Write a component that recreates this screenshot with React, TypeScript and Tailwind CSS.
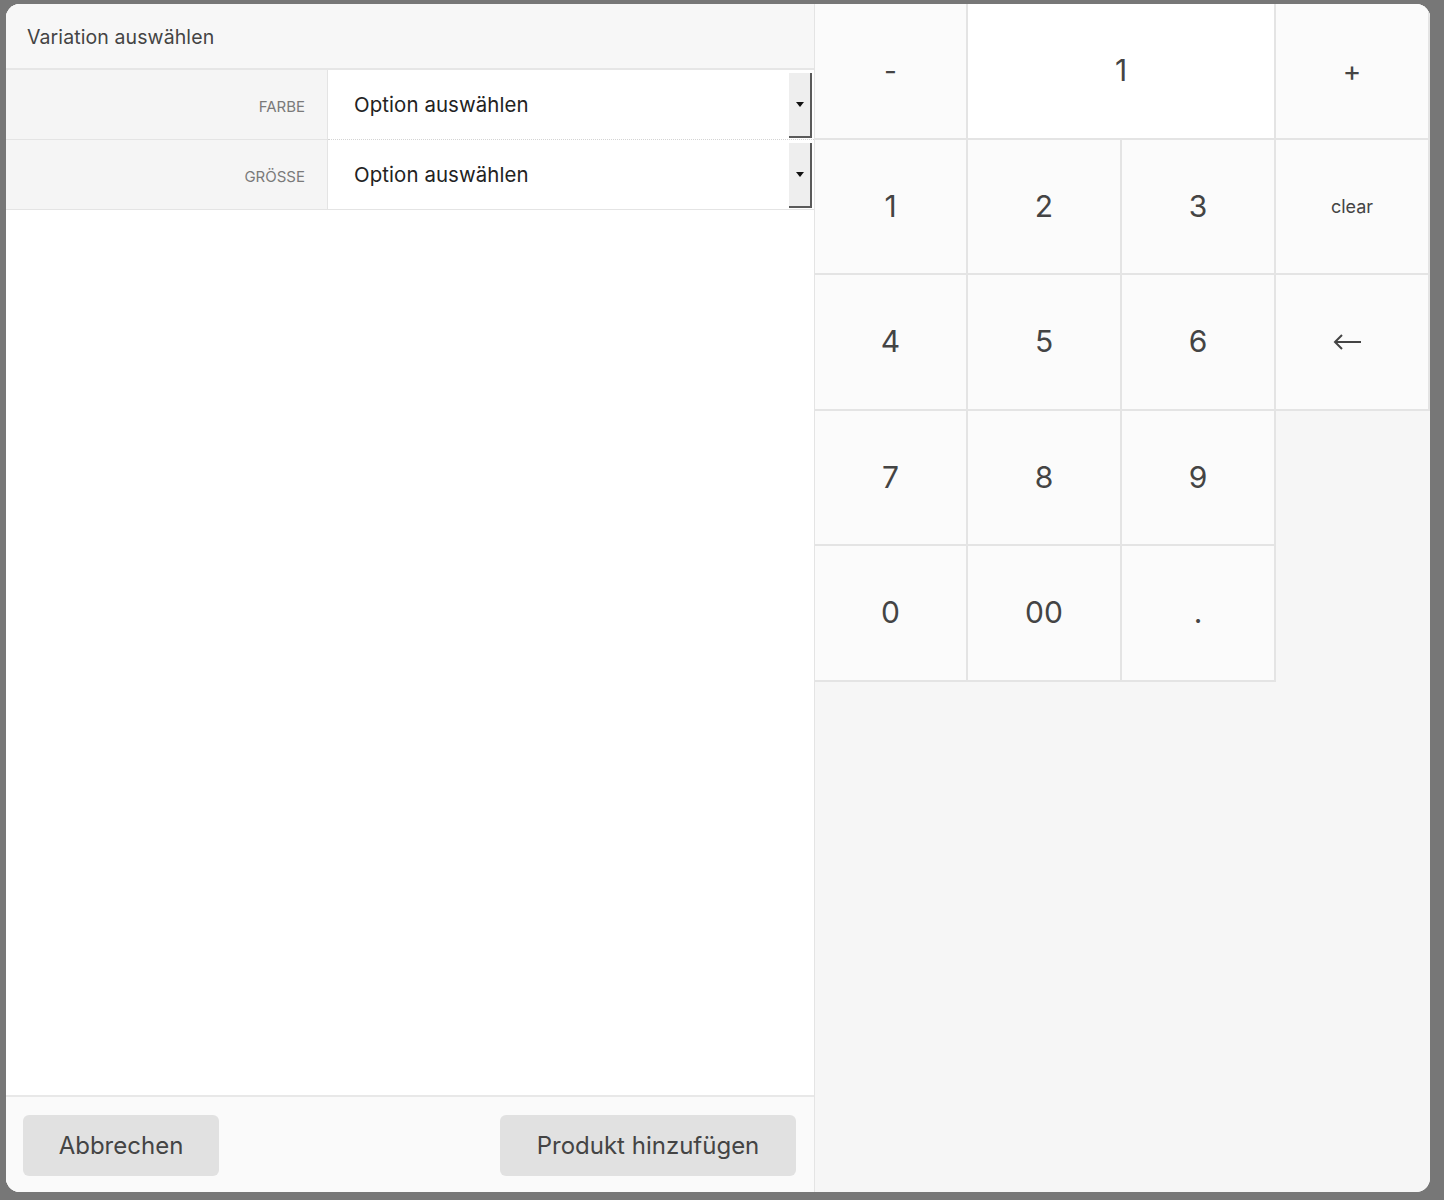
import React from 'react';

const font = { fontFamily: 'Inter, "Liberation Sans", Arial, sans-serif' };

function Arrow() {
  return (
    <div className="w-[23px] h-[65px] mr-[2px] mt-[1px] bg-[#eeeeee] border-r-2 border-b-2 border-[#5a5a5a] flex items-center justify-center">
      <div className="w-0 h-0 border-l-[4px] border-r-[4px] border-t-[5px] border-l-transparent border-r-transparent border-t-[#111]" />
    </div>
  );
}

function SelectRow({ label, dotted }: { label: string; dotted?: boolean }) {
  return (
    <div className="flex h-[70px] border-b border-[#e4e4e4]">
      <div className="w-[322px] shrink-0 bg-[#f5f5f5] border-r border-[#e4e4e4] flex items-center justify-end pr-[22px] pt-[5px] text-[15px] text-[#7a7a7a]">
        {label}
      </div>
      <div
        className={`flex-1 flex items-center bg-white pl-[26px] ${
          dotted ? 'border-b border-dotted border-[#d4d4d4] -mb-px' : ''
        }`}
      >
        <span className="flex-1 pt-[2px] text-[20.4px] tracking-[0.1px] text-[#222]">Option auswählen</span>
        <Arrow />
      </div>
    </div>
  );
}

function Key({ children, className = '' }: { children: React.ReactNode; className?: string }) {
  return (
    <button className={`flex items-center justify-center bg-[#fbfbfb] border-r-2 border-b-2 border-[#e4e4e4] text-[#444] ${className}`}>
      {children}
    </button>
  );
}

export default function App() {
  return (
    <div className="w-[1444px] h-[1200px] bg-[#777777] pt-[4px] pl-[6px] overflow-hidden" style={font}>
      <div className="w-[1424px] h-[1188px] rounded-[14px] overflow-hidden flex bg-white">
        {/* variation form */}
        <div className="w-[808px] shrink-0 flex flex-col bg-white">
          <div className="h-[66px] bg-[#f7f7f7] border-b-2 border-[#e6e6e6] flex items-center pl-[21px] pt-[4px] text-[19.5px] tracking-[0.1px] text-[#444]">
            Variation auswählen
          </div>
          <SelectRow label="FARBE" dotted />
          <SelectRow label="GRÖSSE" />
          <div className="flex-1 bg-white" />
          <div className="h-[97px] border-t-2 border-[#e8e8e8] bg-[#fafafa] flex items-center justify-between pl-[17px] pr-[18px] pt-[2px]">
            <button className="w-[196px] h-[61px] rounded-[6px] bg-[#e1e1e1] text-[24px] text-[#444]">Abbrechen</button>
            <button className="w-[296px] h-[61px] rounded-[6px] bg-[#e1e1e1] text-[24px] text-[#444]">Produkt hinzufügen</button>
          </div>
        </div>

        {/* numpad */}
        <div className="flex-1 bg-[#f6f6f6] border-l border-[#e4e4e4]">
          <div className="grid grid-cols-[153px_154px_154px_154px] auto-rows-[135.5px]">
            <Key className="text-[28px]">-</Key>
            <div className="col-span-2 bg-white border-r-2 border-b-2 border-[#e4e4e4] flex items-center justify-center text-[30px] text-[#444]">1</div>
            <Key className="text-[28px]">+</Key>
            <Key className="text-[30px]">1</Key>
            <Key className="text-[30px]">2</Key>
            <Key className="text-[30px]">3</Key>
            <Key className="text-[18px]">clear</Key>
            <Key className="text-[30px]">4</Key>
            <Key className="text-[30px]">5</Key>
            <Key className="text-[30px]">6</Key>
            <Key className="pr-[10px]">
              <svg width="30" height="20" viewBox="0 0 30 20" fill="none" stroke="#444" strokeWidth="2">
                <path d="M29 10H3" />
                <path d="M10 3L3 10L10 17" />
              </svg>
            </Key>
            <Key className="text-[30px]">7</Key>
            <Key className="text-[30px]">8</Key>
            <Key className="text-[30px]">9</Key>
            <div />
            <Key className="text-[30px]">0</Key>
            <Key className="text-[30px]">00</Key>
            <Key className="text-[30px]">.</Key>
          </div>
        </div>
      </div>
    </div>
  );
}
